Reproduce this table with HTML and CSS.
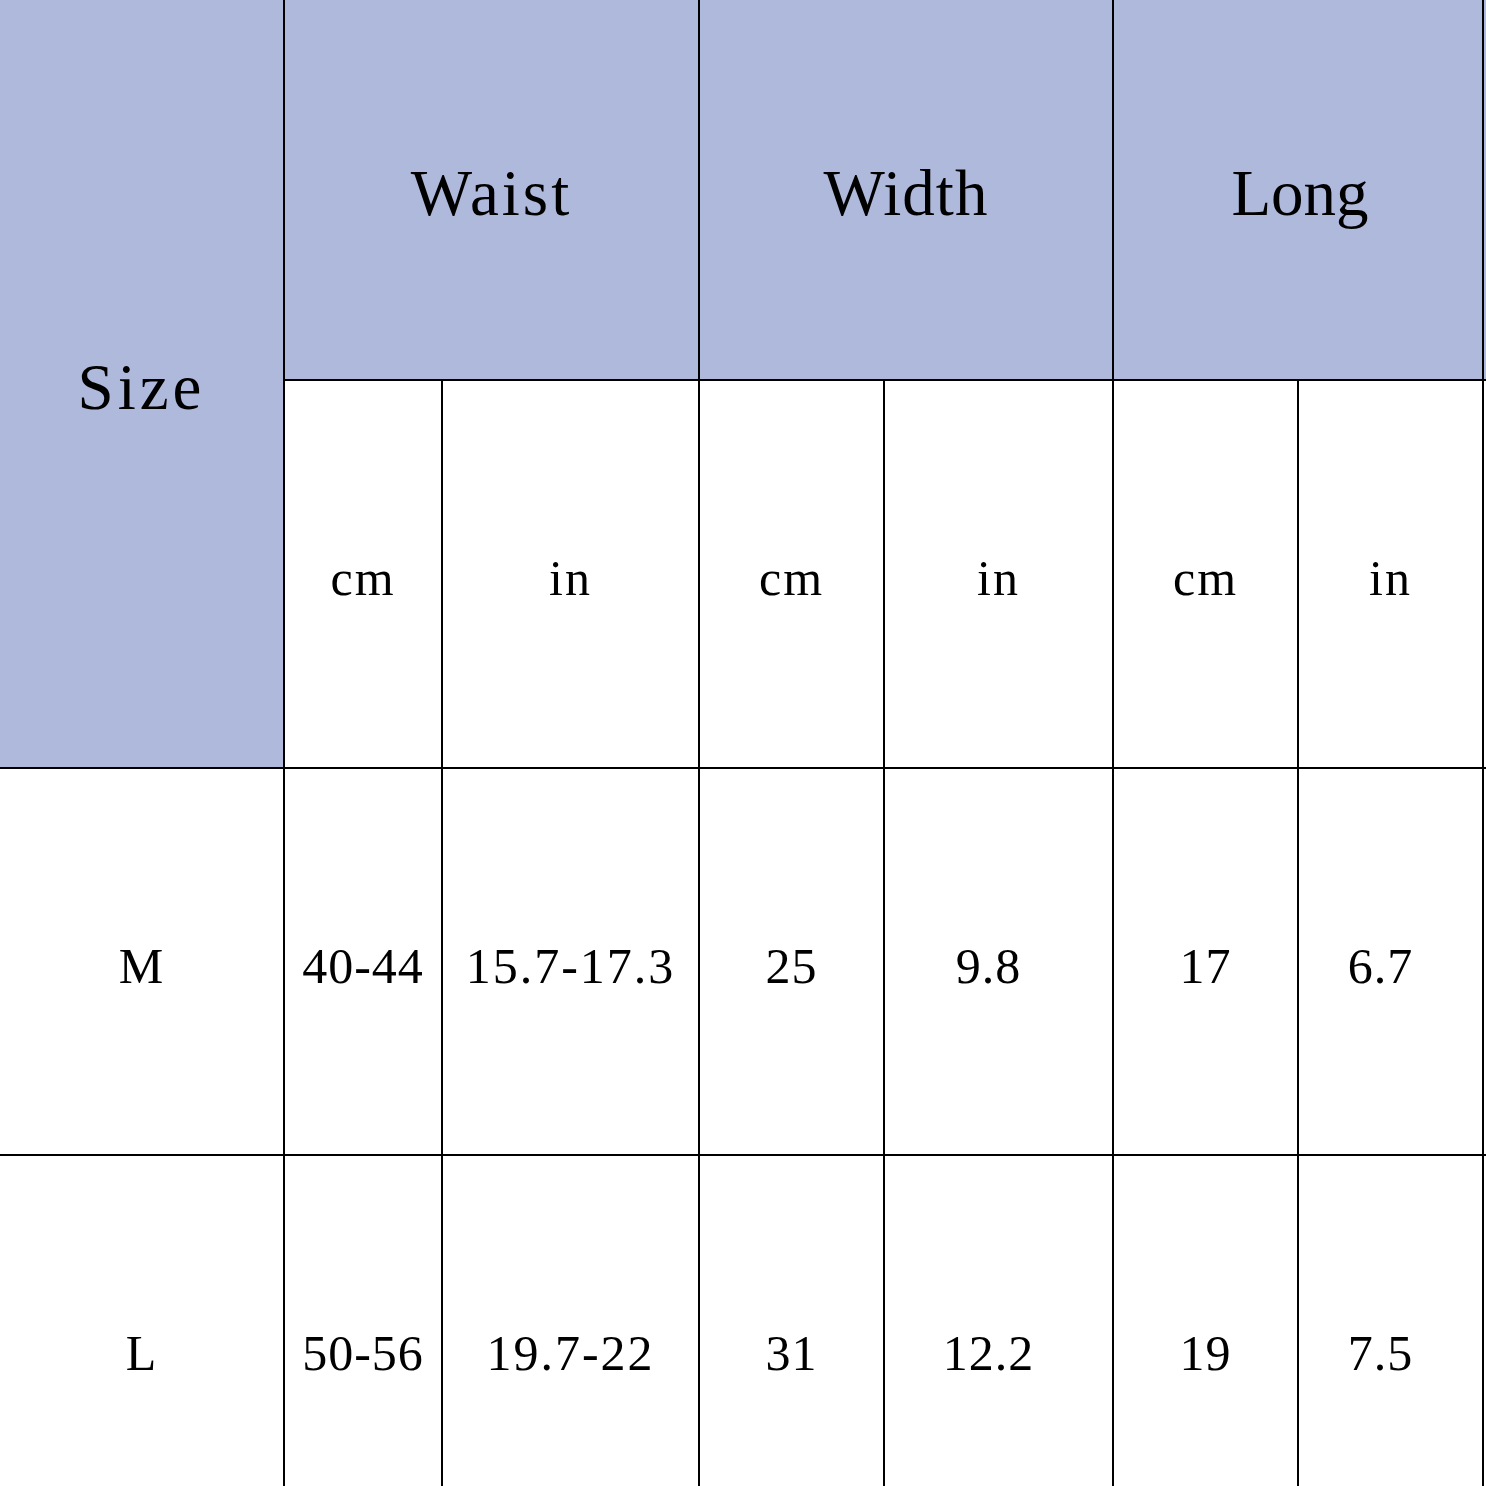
FILE: index.html
```html
<!DOCTYPE html>
<html lang="en">
<head>
<meta charset="utf-8">
<title>Size chart</title>
<link rel="stylesheet" href="styles.css">
</head>
<body>
<div class="chart">
  <div class="cell head size">Size</div>
  <div class="cell head group g-waist">Waist</div>
  <div class="cell head group g-width">Width</div>
  <div class="cell head group g-long">Long</div>
  <div class="cell head edge"></div>

  <div class="cell unit">cm</div>
  <div class="cell unit">in</div>
  <div class="cell unit">cm</div>
  <div class="cell unit">in</div>
  <div class="cell unit">cm</div>
  <div class="cell unit">in</div>
  <div class="cell edge-w"></div>

  <div class="cell val">M</div>
  <div class="cell val">40-44</div>
  <div class="cell val wide">15.7-17.3</div>
  <div class="cell val">25</div>
  <div class="cell val shift">9.8</div>
  <div class="cell val">17</div>
  <div class="cell val shift">6.7</div>
  <div class="cell edge-w"></div>

  <div class="cell val">L</div>
  <div class="cell val">50-56</div>
  <div class="cell val wide">19.7-22</div>
  <div class="cell val">31</div>
  <div class="cell val shift">12.2</div>
  <div class="cell val">19</div>
  <div class="cell val shift">7.5</div>
  <div class="cell edge-w"></div>
</div>
</body>
</html>
```

FILE: styles.css
```css
html, body {
  margin: 0;
  padding: 0;
  overflow: hidden;
  background: #ffffff;
}

.chart {
  display: grid;
  grid-template-columns: 283px 156px 255px 183px 227px 183px 183px 1fr;
  grid-template-rows: 379px 386px 385px 386px;
  gap: 2px;
  width: 1486px;
  background: #000000;
  font-family: "Liberation Serif", "Noto Sans CJK SC", serif;
  color: #000000;
}

.cell {
  display: flex;
  align-items: center;
  justify-content: center;
  background: #ffffff;
  padding-top: 8px;
  box-sizing: border-box;
}

.head {
  background: #afb9dc;
  font-size: 65px;
  letter-spacing: 2px;
}

.size {
  grid-row: 1 / span 2;
  letter-spacing: 4px;
}

.group {
  grid-column: span 2;
}

.g-waist { letter-spacing: 3px; }
.g-width { letter-spacing: 1px; }
.g-long { letter-spacing: 0; padding-left: 4px; }

.unit,
.val {
  font-size: 50px;
  letter-spacing: 1px;
}

.unit {
  letter-spacing: 2px;
}

.wide {
  letter-spacing: 2px;
}

.shift {
  padding-right: 20px;
}
```
